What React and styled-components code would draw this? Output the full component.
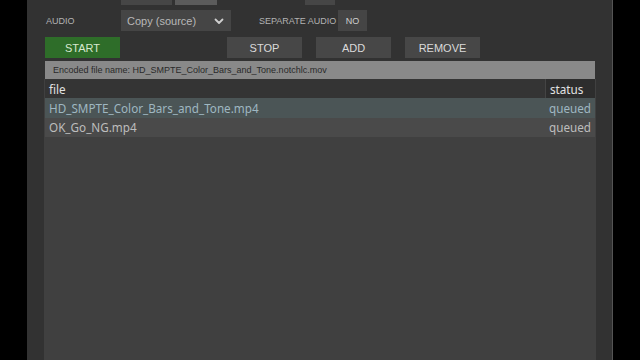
import React from 'react';
import styled, { createGlobalStyle } from 'styled-components';

const GlobalStyle = createGlobalStyle`
   html, body {
      margin: 0;
      padding: 0;
      background: #000;
      height: 360px;
      overflow: hidden;
   }
   #root {
      height: 360px;
   }
`;

const Page = styled.div`
   display: flex;
   height: 360px;
   padding-left: 27px;
   font-family: "Liberation Sans", Arial, sans-serif;
`;

const Panel = styled.div`
   width: 552px;
   padding: 0 16px 0 17px;
   background: #323232;
   border-right: 1px solid #545454;
   display: flex;
   flex-direction: column;
`;

const FormRow = styled.div`
   display: flex;
   align-items: center;
   height: 21px;
   margin-top: ${p => p.top || 0}px;
`;

const Label = styled.span`
   width: ${p => p.width || 77}px;
   padding-left: 2px;
   box-sizing: border-box;
   font-size: 9px;
   color: #b3b3b3;
   text-transform: uppercase;
   flex-shrink: 0;
`;

const Segment = styled.div`
   width: ${p => p.width}px;
   height: 21px;
   margin-left: ${p => p.gap || 0}px;
   background: ${p => (p.active ? '#5b5b5b' : '#464646')};
   flex-shrink: 0;
`;

const Select = styled.div`
   width: 110px;
   height: 21px;
   background: #454545;
   display: flex;
   align-items: center;
   justify-content: space-between;
   padding: 0 6px 0 6px;
   box-sizing: border-box;
   color: #b8b8b8;
   font-size: 11px;
   margin-right: 26px;
   svg {
      width: 12px;
      height: 12px;
   }
`;

const Toggle = styled.div`
   width: 29px;
   height: 21px;
   background: #454545;
   color: #d0d0d0;
   font-size: 9px;
   display: flex;
   align-items: center;
   justify-content: center;
`;

const ButtonRow = styled.div`
   display: flex;
   gap: 14px;
   margin-top: 6px;
   padding-left: 1px;
`;

const Button = styled.button`
   width: 75px;
   height: 21px;
   border: none;
   padding: 0;
   font-family: inherit;
   font-size: 11px;
   color: ${p => (p.primary ? '#d6e8cf' : '#dadada')};
   background: ${p => (p.primary ? '#2e6d29' : '#474747')};
   margin-right: ${p => p.spacer || 0}px;
`;

const EncodedBar = styled.div`
   margin: 3px 1px 0;
   height: 18px;
   background: #898989;
   color: #2a2a2a;
   font-size: 9px;
   display: flex;
   align-items: center;
   padding-left: 8px;
`;

const Table = styled.div`
   flex: 1;
   background: #404040;
   padding: 0 1px;
   font-family: "Noto Sans", "DejaVu Sans", sans-serif;
   font-size: 11.7px;
`;

const Row = styled.div`
   display: flex;
   height: ${p => p.h || 19.5}px;
   align-items: center;
   background: ${p => p.bg};
   color: ${p => p.color};
`;

const FileCell = styled.div`
   flex: 1;
   padding-left: 4px;
   white-space: nowrap;
`;

const StatusCell = styled.div`
   width: 50px;
   height: 100%;
   display: flex;
   align-items: center;
   padding-left: 4px;
   box-sizing: border-box;
   background: ${p => p.bg || 'transparent'};
   border-left: ${p => (p.header ? '1px solid #444' : 'none')};
`;

const Chevron = () => (
   <svg viewBox="0 0 12 12" fill="none" stroke="#cfcfcf" strokeWidth="1.8" strokeLinecap="round" strokeLinejoin="round">
      <path d="M2.5 4.5 L6 8 L9.5 4.5" />
   </svg>
);

const files = [
   { name: 'HD_SMPTE_Color_Bars_and_Tone.mp4', status: 'queued', bg: '#4b5556', color: '#9fb7c1' },
   { name: 'OK_Go_NG.mp4', status: 'queued', bg: '#4a4a4a', color: '#bdbdbd' },
];

export default function App() {
   return (
      <Page>
         <GlobalStyle />
         <Panel>
            <FormRow top={-16}>
               <Label />
               <Segment width={51} />
               <Segment width={42} gap={3} active />
               <Segment width={30} gap={88} />
            </FormRow>
            <FormRow top={5}>
               <Label>Audio</Label>
               <Select>
                  Copy (source)
                  <Chevron />
               </Select>
               <Label width={81}>Separate audio</Label>
               <Toggle>NO</Toggle>
            </FormRow>
            <ButtonRow>
               <Button primary spacer={93}>START</Button>
               <Button>STOP</Button>
               <Button>ADD</Button>
               <Button>REMOVE</Button>
            </ButtonRow>
            <EncodedBar>Encoded file name: HD_SMPTE_Color_Bars_and_Tone.notchlc.mov</EncodedBar>
            <Table>
               <Row h={19} bg="#343434" color="#e2e2e2">
                  <FileCell>file</FileCell>
                  <StatusCell header bg="#2d2d2d">status</StatusCell>
               </Row>
               {files.map(f => (
                  <Row key={f.name} bg={f.bg} color={f.color}>
                     <FileCell>{f.name}</FileCell>
                     <StatusCell>{f.status}</StatusCell>
                  </Row>
               ))}
            </Table>
         </Panel>
      </Page>
   );
}
